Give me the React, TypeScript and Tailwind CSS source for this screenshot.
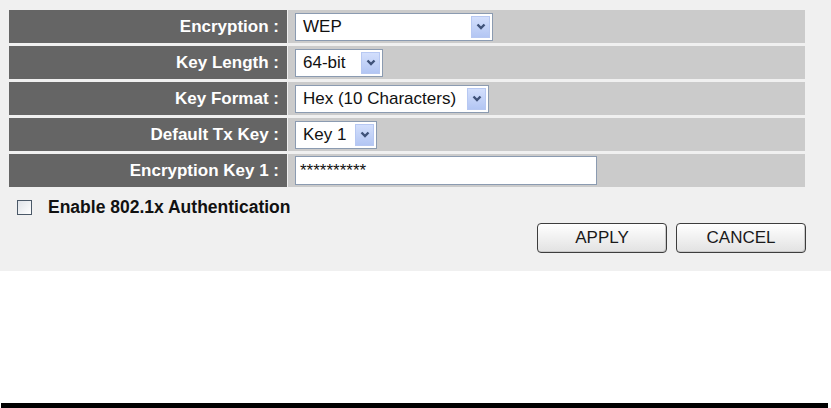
const font = { fontFamily: '"Liberation Sans", Arial, sans-serif' };

function Chevron() {
  return (
    <svg width="10" height="7" viewBox="0 0 10 7" aria-hidden="true">
      <path d="M1.5 1.5 L5 5 L8.5 1.5" fill="none" stroke="#3f5279" strokeWidth="2.4" />
    </svg>
  );
}

function Select({ value, width }: { value: string; width: string }) {
  return (
    <div
      className={`flex h-[28px] items-center justify-between border border-[#8b9bb1] bg-white p-[2px] ${width}`}
    >
      <span className="pl-[5px] text-[17px] leading-none text-[#111]">{value}</span>
      <span className="flex h-full w-[19px] items-center justify-center border border-[#b7c8f2] bg-gradient-to-b from-[#d3dffc] to-[#b3c6f3]">
        <Chevron />
      </span>
    </div>
  );
}

function Row({ label, children }: { label: string; children: React.ReactNode }) {
  return (
    <div className="flex h-[33px]">
      <div className="flex w-[278px] items-center justify-end bg-[#656565] pr-[8px] text-[17px] font-bold text-white">
        {label}
      </div>
      <div className="ml-[1px] flex flex-1 items-center bg-[#cbcbcb] pl-[7px]">{children}</div>
    </div>
  );
}

function Button({ label }: { label: string }) {
  return (
    <button className="h-[30px] w-[130px] rounded-[4px] border border-[#3d3d3d] bg-gradient-to-b from-[#ffffff] to-[#e2e2e2] text-[17px] text-[#1a1a1a] shadow-[inset_-1px_-1px_0_#c9c9c9]">
      {label}
    </button>
  );
}

export default function App() {
  return (
    <div className="relative h-[408px] w-[831px] overflow-hidden bg-white" style={font}>
      <div className="h-[271px] bg-[#f0f0f0] pl-[9px] pt-[10px]">
        <div className="flex w-[796px] flex-col gap-[3px]">
          <Row label="Encryption :">
            <Select value="WEP" width="w-[198px]" />
          </Row>
          <Row label="Key Length :">
            <Select value="64-bit" width="w-[88px]" />
          </Row>
          <Row label="Key Format :">
            <Select value="Hex (10 Characters)" width="w-[194px]" />
          </Row>
          <Row label="Default Tx Key :">
            <Select value="Key 1" width="w-[82px]" />
          </Row>
          <Row label="Encryption Key 1 :">
            <div className="flex h-[29px] w-[302px] items-center border border-[#8b9bb1] bg-white pl-[4px] text-[17px] leading-none text-[#111]">
              **********
            </div>
          </Row>
        </div>
        <div className="mt-[6px] flex h-[28px] items-center pl-[8px]">
          <span className="h-[15px] w-[15px] border border-[#4b5968] bg-gradient-to-br from-[#dfe3e8] to-white" />
          <span className="ml-[16px] text-[17.5px] font-bold text-[#111]">Enable 802.1x Authentication</span>
        </div>
        <div className="mt-[2px] flex w-[797px] justify-end gap-[9px]">
          <Button label="APPLY" />
          <Button label="CANCEL" />
        </div>
      </div>
      <div className="absolute left-[1px] top-[403px] h-[5px] w-[827px] bg-black" />
    </div>
  );
}
